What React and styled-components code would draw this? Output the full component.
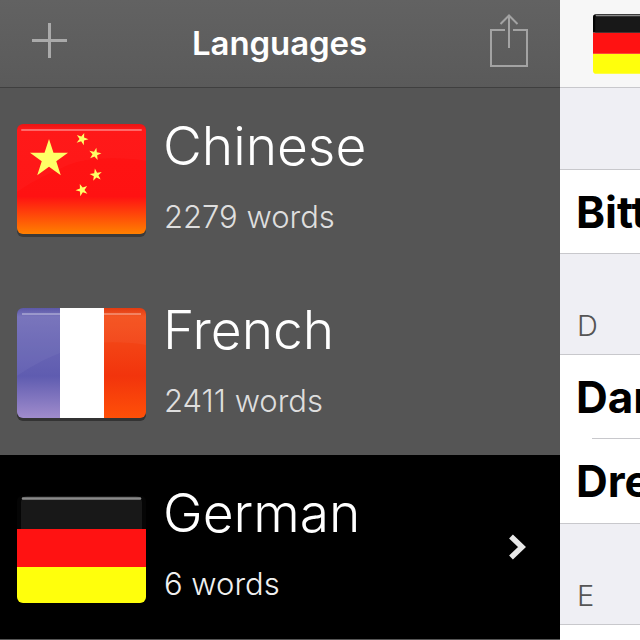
import React from 'react'
import styled, { createGlobalStyle } from 'styled-components'

const Global = createGlobalStyle`
	html, body {
		margin: 0;
		padding: 0;
		background: #fff;
		font-family: Inter, "Liberation Sans", sans-serif;
	}
`

const Screen = styled.div`
	width: 640px;
	height: 640px;
	display: flex;
	overflow: hidden;
`

const Sidebar = styled.div`
	width: 560px;
	flex-shrink: 0;
	display: flex;
	flex-direction: column;
	background: #555;
`

const Toolbar = styled.div`
	height: 87px;
	flex-shrink: 0;
	display: flex;
	align-items: center;
	justify-content: space-between;
	padding: 0 32px;
	background: linear-gradient(#626262, #5a5a5a);
	border-bottom: 1px solid #3f3f3f;
`

const ToolIcon = styled.svg`
	display: block;
	margin-bottom: 6px;
`

const Title = styled.div`
	margin: 0 0 2px 2px;
	color: #fff;
	font-size: 33px;
	font-weight: 600;
	letter-spacing: -0.1px;
`

const Row = styled.div`
	height: ${p => p.$h}px;
	flex-shrink: 0;
	display: flex;
	align-items: center;
	padding: 0 32px 0 17px;
	background: ${p => (p.$active ? '#000' : 'transparent')};
`

const Info = styled.div`
	margin-left: 17px;
	padding-bottom: 10px;
	flex: 1;
	color: #fff;
`

const Name = styled.div`
	font-size: 53.3px;
	line-height: 62px;
	font-weight: 300;
`

const Count = styled.div`
	margin-top: 22px;
	padding-left: 1px;
	font-size: 31px;
	line-height: 36px;
	font-weight: 300;
	color: ${p => (p.$active ? '#f0f0f0' : '#dedede')};
`

const Detail = styled.div`
	flex: 1;
	min-width: 0;
	background: #efeff4;
`

const DetailBar = styled.div`
	height: 87px;
	display: flex;
	align-items: center;
	padding-left: 33px;
	background: #f7f7f7;
	border-bottom: 1px solid #c8c8cc;
`

const Section = styled.div`
	height: ${p => p.$h}px;
	display: flex;
	align-items: flex-end;
	padding: 0 0 10px 17px;
	box-sizing: border-box;
	font-size: 29px;
	line-height: 36px;
	font-weight: 300;
	color: #555;
	border-bottom: 1px solid #c8c8cc;
`

const WordRow = styled.div`
	height: ${p => p.$h || 84}px;
	box-sizing: border-box;
	padding-left: 16px;
	display: flex;
	align-items: center;
	background: #fff;
	border-bottom: ${p => (p.$open ? 'none' : '1px solid #c8c8cc')};
	font-size: 44px;
	font-weight: 700;
	color: #000;
	white-space: nowrap;
	overflow: hidden;
`

const Inset = styled.div`
	height: 1px;
	padding-left: 32px;
	background: #fff;

	&::after {
		content: '';
		display: block;
		height: 1px;
		background: #c8c8cc;
	}
`

const Star = ({ x, y, r, rot = 0 }) => {
	const pts = []
	for (let i = 0; i < 10; i++) {
		const rr = i % 2 ? r * 0.382 : r
		const a = ((i * 36 - 90 + rot) * Math.PI) / 180
		pts.push(`${x + rr * Math.cos(a)},${y + rr * Math.sin(a)}`)
	}
	return <polygon points={pts.join(' ')} fill="#ffff66" />
}

const FlagSvg = styled.svg`
	flex-shrink: 0;
	display: block;
	margin-top: ${p => p.$top || 0}px;
`

const ARC = 'M0 0H129V37C105 33 65 32 43 45 25 52 12 60 0 68Z'

const Defs = () => (
	<svg width="0" height="0" style={{ position: 'absolute' }}>
		<defs>
			<linearGradient id="cn" x1="0" y1="0" x2="0" y2="1">
				<stop offset="0" stopColor="#e81010" />
				<stop offset="0.05" stopColor="#ff1414" />
				<stop offset="0.66" stopColor="#ff1212" />
				<stop offset="1" stopColor="#ff8000" />
			</linearGradient>
			<linearGradient id="fr-blue" x1="0" y1="0" x2="0" y2="1">
				<stop offset="0" stopColor="#5652a4" />
				<stop offset="0.08" stopColor="#7470ba" />
				<stop offset="0.62" stopColor="#5f5cb0" />
				<stop offset="1" stopColor="#a08ccc" />
			</linearGradient>
			<linearGradient id="fr-red" x1="0" y1="0" x2="0" y2="1">
				<stop offset="0" stopColor="#e03408" />
				<stop offset="0.08" stopColor="#f4501c" />
				<stop offset="0.62" stopColor="#f2340c" />
				<stop offset="1" stopColor="#ff5008" />
			</linearGradient>
			<clipPath id="flag-clip">
				<rect x="0" y="0" width="129" height="110" rx="6" />
			</clipPath>
		</defs>
	</svg>
)

const ChinaFlag = () => (
	<FlagSvg width="129" height="113" viewBox="0 0 129 113">
		<rect x="0" y="1" width="129" height="112" rx="6" fill="#3a3a3a" />
		<g clipPath="url(#flag-clip)">
			<rect width="129" height="110" fill="url(#cn)" />
			<path d={ARC} fill="#fff" fillOpacity="0.025" />
			<path d="M5 6h119" stroke="#fff" strokeOpacity="0.35" strokeWidth="2" strokeLinecap="round" />
		</g>
		<Star x={32} y={35} r={20} />
		<Star x={65} y={15} r={6.5} rot={20} />
		<Star x={78} y={30} r={6.5} rot={12} />
		<Star x={79} y={51} r={6.5} rot={-10} />
		<Star x={65} y={66} r={6.5} rot={-20} />
	</FlagSvg>
)

const FranceFlag = () => (
	<FlagSvg width="129" height="113" viewBox="0 0 129 113" $top={2}>
		<rect x="0" y="1" width="129" height="112" rx="6" fill="#333" />
		<g clipPath="url(#flag-clip)">
			<rect width="43" height="110" fill="url(#fr-blue)" />
			<rect x="87" width="42" height="110" fill="url(#fr-red)" />
			<path d={ARC} fill="#fff" fillOpacity="0.04" />
			<rect x="43" width="44" height="110" fill="#fff" />
			<path d="M5 6h38M87 6h37" stroke="#fff" strokeOpacity="0.3" strokeWidth="2" />
		</g>
	</FlagSvg>
)

const GermanyFlag = ({ width = 129, height = 107, top }) => (
	<FlagSvg width={width} height={height} viewBox="0 0 129 107" $top={top}>
		<path d="M0 71H129V101a6 6 0 0 1-6 6H6a6 6 0 0 1-6-6Z" fill="#ffff0c" />
		<rect y="33" width="129" height="38" fill="#ff1212" />
		<path d="M0 33V5a5 5 0 0 1 5-5H124a5 5 0 0 1 5 5V33Z" fill="#050505" />
		<path d="M4 33V6a6 6 0 0 1 6-6H119a6 6 0 0 1 6 6V33Z" fill="#181818" />
		<path d="M6 2.5h117" stroke="#8a8a8a" strokeWidth="2.5" strokeLinecap="round" />
	</FlagSvg>
)

const PlusIcon = () => (
	<ToolIcon width="35" height="35" viewBox="0 0 35 35" fill="none" stroke="#aaa" strokeWidth="3">
		<path d="M17.5 0V35M0 17.5H35" />
	</ToolIcon>
)

const ShareIcon = () => (
	<ToolIcon width="38" height="53" viewBox="0 0 38 53" fill="none" stroke="#a3a3a3" strokeWidth="2">
		<path d="M15 16H1V52H37V16H23" />
		<path d="M19 1.5V34M10.5 10 19 1.5 27.5 10" />
	</ToolIcon>
)

const Chevron = () => (
	<svg width="20" height="26" viewBox="0 0 20 26" fill="none" stroke="#e8e8e8" strokeWidth="5.5">
		<path d="M3 2.5 14 13 3 23.5" />
	</svg>
)

export default function App() {
	return (
		<Screen>
			<Global />
			<Defs />
			<Sidebar>
				<Toolbar>
					<PlusIcon />
					<Title>Languages</Title>
					<ShareIcon />
				</Toolbar>
				<Row $h={184}>
					<ChinaFlag />
					<Info>
						<Name>Chinese</Name>
						<Count>2279 words</Count>
					</Info>
				</Row>
				<Row $h={183}>
					<FranceFlag />
					<Info>
						<Name>French</Name>
						<Count>2411 words</Count>
					</Info>
				</Row>
				<Row $h={184} $active>
					<GermanyFlag top={5} />
					<Info>
						<Name>German</Name>
						<Count $active>6 words</Count>
					</Info>
					<Chevron />
				</Row>
			</Sidebar>
			<Detail>
				<DetailBar>
					<GermanyFlag width={72} height={60} />
				</DetailBar>
				<Section $h={82} />
				<WordRow>Bitte</WordRow>
				<Section $h={101}>D</Section>
				<WordRow $h={83} $open>Danke</WordRow>
				<Inset />
				<WordRow $h={85}>Drei</WordRow>
				<Section $h={101}>E</Section>
				<WordRow />
			</Detail>
		</Screen>
	)
}
